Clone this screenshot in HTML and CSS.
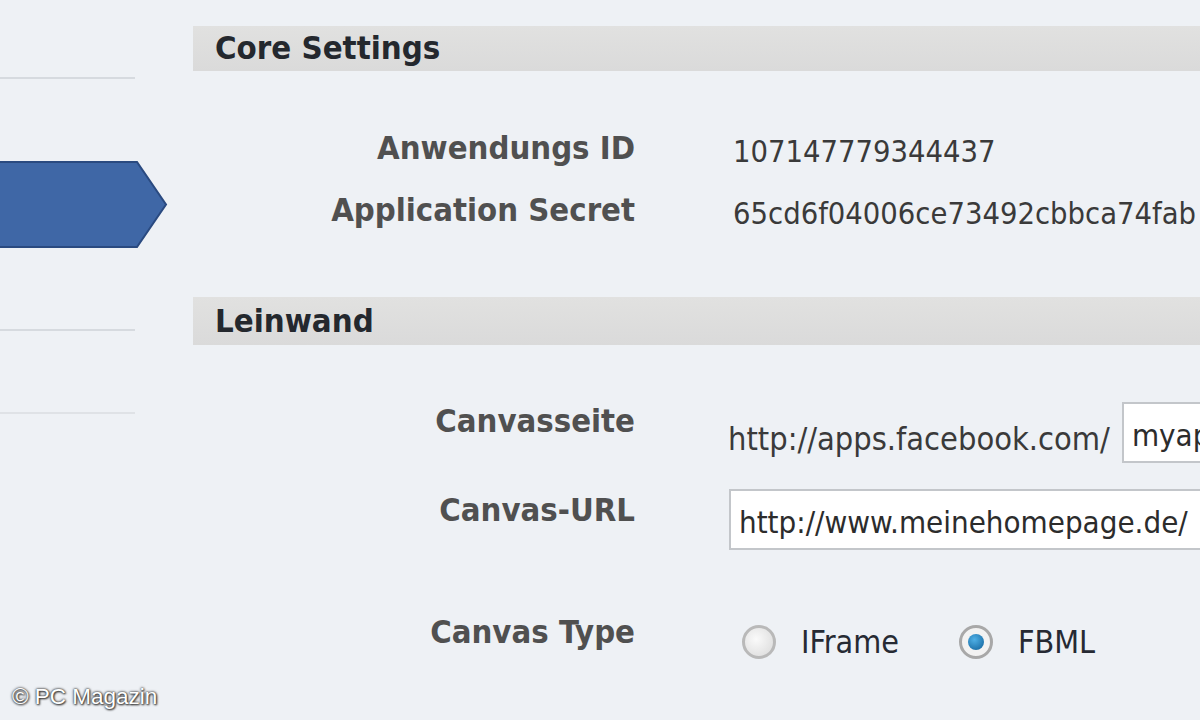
FILE: index.html
```html
<!DOCTYPE html>
<html lang="de">

<head>
  <meta charset="UTF-8">
  <title>Anwendung bearbeiten</title>
  <link rel="stylesheet" href="styles.css">
</head>

<body>
  <div class="page">
    <div class="sidebar">
      <div class="nav-item nav-first"></div>
      <div class="nav-active">
        <svg width="170" height="88" viewBox="0 0 170 88">
          <polygon points="-2,1 137,1 166,43.5 137,86 -2,86" fill="#3f67a6" stroke="#2a4a80" stroke-width="2"/>
        </svg>
      </div>
      <div class="nav-item nav-second"></div>
      <div class="nav-item nav-third"></div>
    </div>

    <div class="main">
      <div class="section-bar">Core Settings</div>

      <div class="row row-id">
        <div class="row-label">Anwendungs ID</div>
        <div class="row-value">107147779344437</div>
      </div>
      <div class="row row-secret">
        <div class="row-label">Application Secret</div>
        <div class="row-value">65cd6f04006ce73492cbbca74fab</div>
      </div>

      <div class="section-bar section-canvas">Leinwand</div>

      <div class="row row-page">
        <div class="row-label">Canvasseite</div>
        <div class="row-value field-inline">
          <span class="prefix">http://apps.facebook.com/</span>
          <input class="text-input input-short" type="text" value="myapp">
        </div>
      </div>
      <div class="row row-url">
        <div class="row-label">Canvas-URL</div>
        <div class="row-value">
          <input class="text-input input-long" type="text" value="http://www.meinehomepage.de/">
        </div>
      </div>
      <div class="row row-type">
        <div class="row-label">Canvas Type</div>
        <div class="row-value radios">
          <label class="radio"><span class="radio-dot"></span>IFrame</label>
          <label class="radio"><span class="radio-dot checked"></span>FBML</label>
        </div>
      </div>
    </div>
  </div>

  <div class="watermark">© PC Magazin</div>
</body>

</html>
```

FILE: styles.css
```css
body {
  margin: 0;
  background-color: #eef1f5;
  font-family: "DejaVu Sans Condensed", "DejaVu Sans", sans-serif;
  color: #333333;
  overflow: hidden;
}

.page {
  display: flex;
  width: 1200px;
  height: 720px;
}

.sidebar {
  width: 193px;
  flex-shrink: 0;
}

.nav-item {
  width: 135px;
  border-bottom: 2px solid #d6dadf;
}

.nav-first {
  height: 77px;
}

.nav-active {
  margin-top: 82px;
  height: 88px;
}

.nav-active svg {
  display: block;
}

.nav-second {
  height: 80px;
}

.nav-third {
  height: 81px;
  border-bottom-color: #dfe2e6;
}

.main {
  flex: 1;
  min-width: 0;
  overflow: hidden;
}

.section-bar {
  margin-top: 26px;
  height: 45px;
  line-height: 45px;
  padding-left: 22px;
  background: linear-gradient(#e1e1e0, #dadada);
  font-weight: bold;
  font-size: 32.7px;
  color: #24282e;
  white-space: nowrap;
}

.section-canvas {
  margin-top: 67px;
  height: 48px;
  line-height: 48px;
}

.row {
  display: flex;
  align-items: flex-start;
}

.row-label {
  width: 442px;
  flex-shrink: 0;
  text-align: right;
  font-weight: bold;
  font-size: 32.6px;
  line-height: 40px;
  color: #505050;
  white-space: nowrap;
}

.row-value {
  margin-left: 98px;
  font-size: 30.6px;
  line-height: 40px;
  color: #3a3a3a;
  white-space: nowrap;
  padding-top: 4px;
}

.row-id {
  margin-top: 57px;
  height: 62px;
}

.row-secret {
  height: 40px;
}

.row-page {
  margin-top: 56px;
  height: 89px;
}

.row-url {
  height: 61px;
}

.row-type {
  margin-top: 61px;
}

.field-inline {
  display: flex;
  align-items: center;
  margin-left: 93px;
  padding-top: 1px;
}

.prefix {
  font-size: 32.3px;
  padding-top: 12px;
  margin-right: 12px;
}

.text-input {
  box-sizing: border-box;
  height: 61px;
  border: 2px solid #c3c6ca;
  background-color: #ffffff;
  font-family: "DejaVu Sans Condensed", "DejaVu Sans", sans-serif;
  font-size: 31px;
  color: #2c2c2c;
  padding: 4px 8px 0;
}

.input-short {
  width: 200px;
}

.input-long {
  width: 520px;
  margin-left: -4px;
  margin-top: -5px;
}

.radios {
  display: flex;
  gap: 60px;
  margin-left: 107px;
  padding-top: 10px;
}

.radio {
  display: flex;
  align-items: center;
  gap: 25px;
  font-size: 32px;
  color: #262a33;
}

.radio-dot {
  box-sizing: border-box;
  width: 34px;
  height: 34px;
  border-radius: 50%;
  border: 3px solid #b9b9b9;
  background: radial-gradient(circle at 40% 40%, #fafafa, #d9d9d9);
  position: relative;
}

.radio-dot.checked {
  border-color: #a8a8a8;
  background: #f2f2f2;
}

.radio-dot.checked::after {
  content: "";
  position: absolute;
  left: 6px;
  top: 6px;
  width: 16px;
  height: 16px;
  border-radius: 50%;
  background: radial-gradient(circle at 40% 35%, #4fb0e6, #0f5f98);
}

.watermark {
  position: absolute;
  left: 12px;
  top: 684px;
  font-family: "Liberation Sans", Arial, sans-serif;
  font-size: 22.5px;
  color: #ffffff;
  text-shadow: 0 0 2px #333333, 0 0 3px #555555, 1px 1px 2px #333333;
}
```
